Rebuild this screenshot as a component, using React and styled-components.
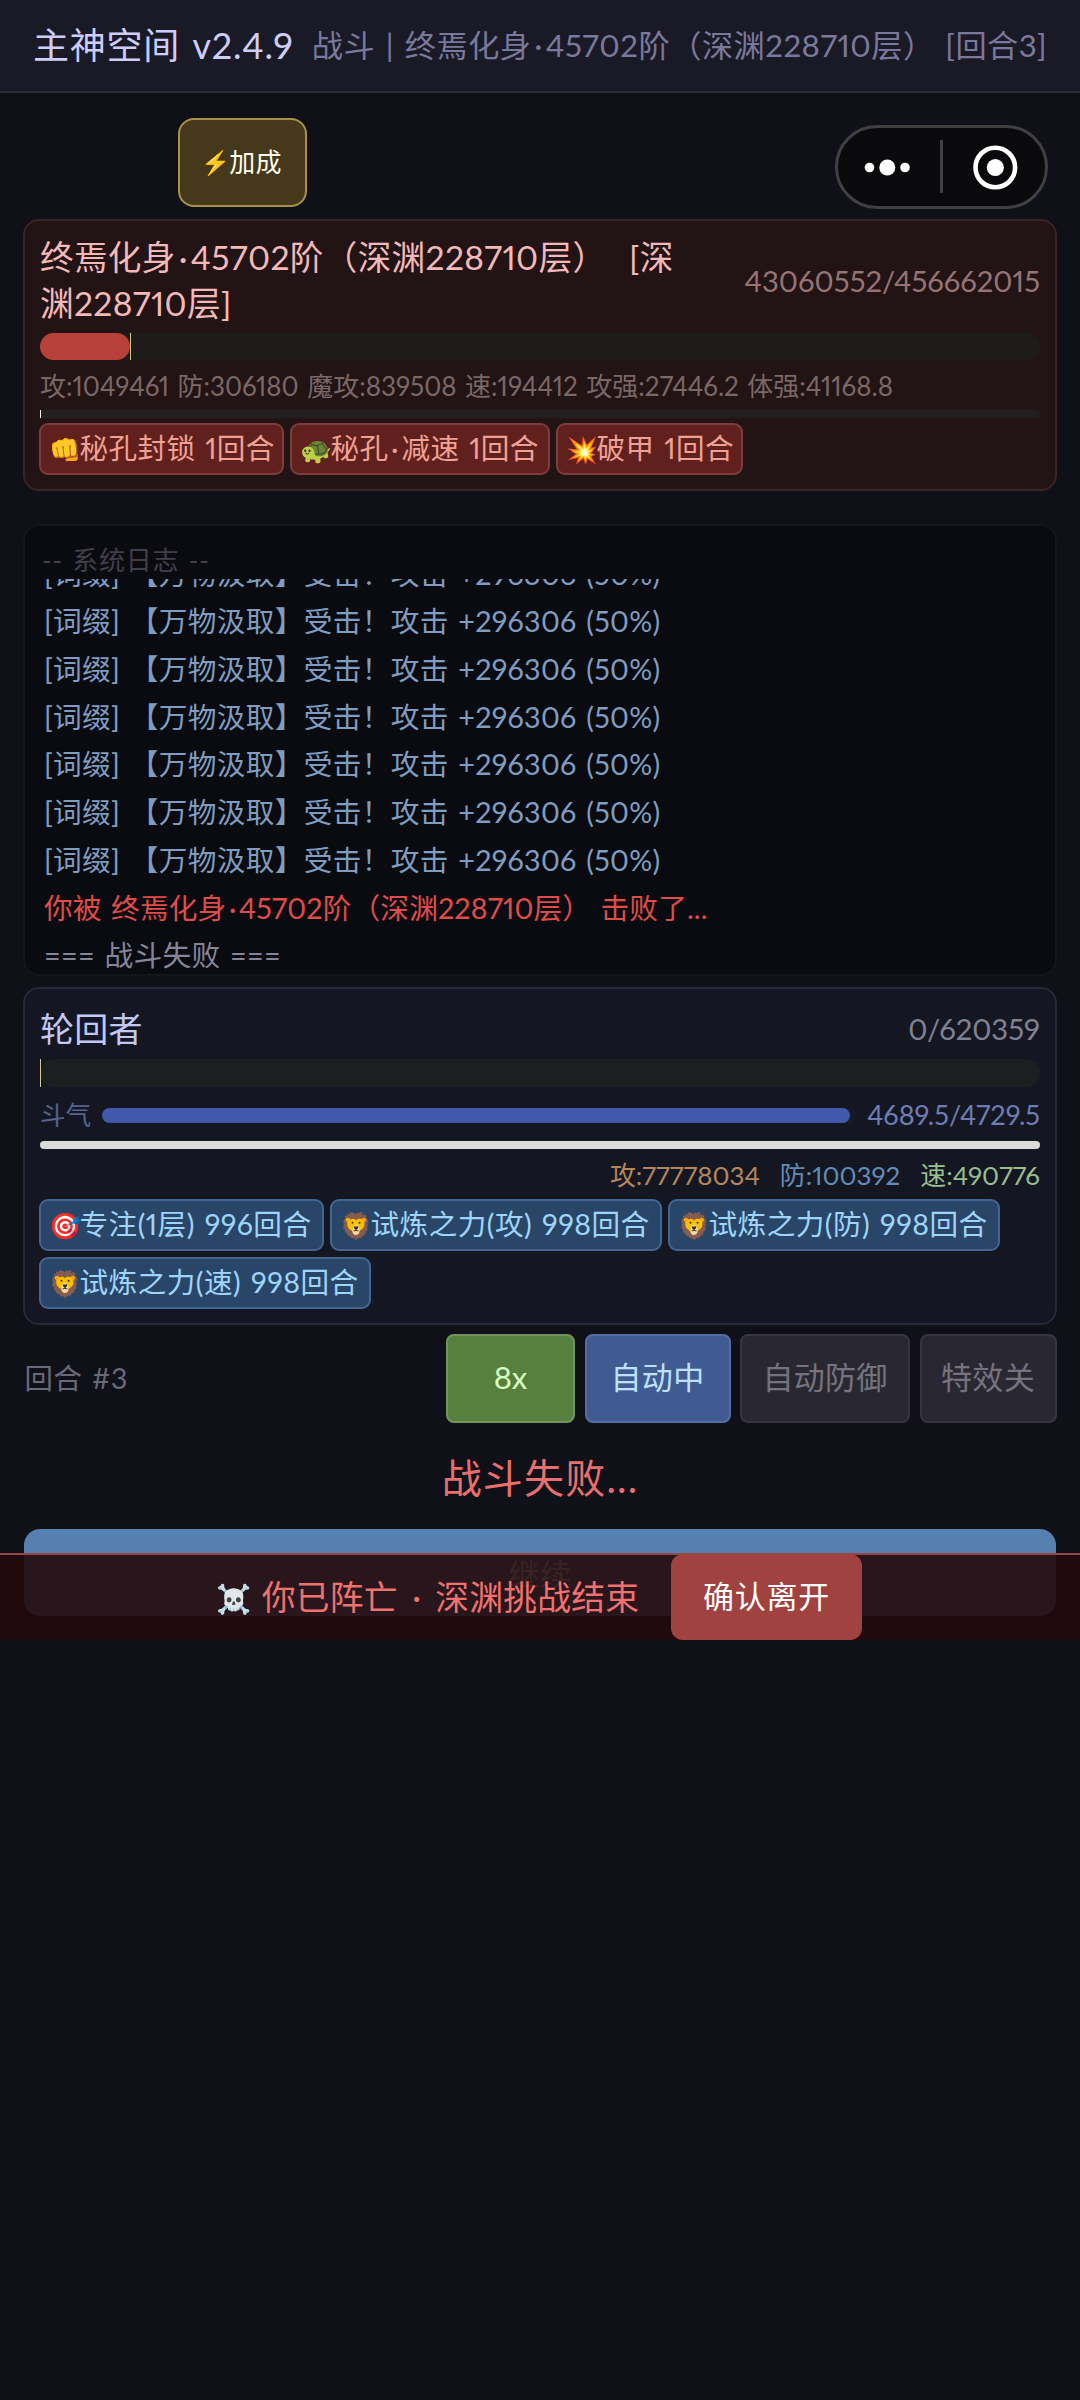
import React from "react";
import styled, { createGlobalStyle } from "styled-components";

const Global = createGlobalStyle`
  * { box-sizing: border-box; }
  body { margin: 0; background: #0f1018; }
`;

const Page = styled.main`
  position: relative;
  width: 1080px;
  height: 2400px;
  display: flex;
  flex-direction: column;
  background: #0f1018;
  overflow: hidden;
  font-family: Lato, "Noto Sans CJK SC", "Noto Color Emoji", sans-serif;
  font-weight: 400;
  font-variant-numeric: proportional-nums;
  white-space: nowrap;
`;

const Text = styled.span`
  display: block;
  font-size: ${(p) => p.$size}px;
  letter-spacing: ${(p) => p.$track || 0}px;
  word-spacing: 0.07em;
  line-height: ${(p) => (p.$line ? p.$line + "px" : 1.2)};
  color: ${(p) => p.$color};
  margin: ${(p) => p.$m || 0};
  white-space: pre;
`;

const Emoji = styled.span`
  font-size: ${(p) => (p.$small ? 0.84 : 0.9)}em;
  letter-spacing: 0;
  line-height: 0;
  margin: 0 ${(p) => (p.$small ? -0.03 : -0.07)}em;
  vertical-align: 0.03em;
`;

const Dot = styled.span`
  padding: 0 0.09em;
`;

function Label({ children, ...rest }) {
  const parts = [].concat(children).join("").split(/(☠️|\p{Extended_Pictographic}|·)/u);
  return (
    <Text {...rest}>
      {parts.map((part, i) => {
        if (i % 2 === 0) return part;
        return part === "·" ? <Dot key={i}>·</Dot> : <Emoji key={i} $small={part === "☠️"}>{part}</Emoji>;
      })}
    </Text>
  );
}

const Header = styled.header`
  height: 93px;
  padding: 0 33px;
  display: flex;
  align-items: center;
  justify-content: space-between;
  background: #1a1a26;
  border-bottom: 2px solid #2d2c39;
`;

const TopTools = styled.div`
  height: 126px;
  padding: 25px 32px 0 178px;
  display: flex;
  justify-content: space-between;
`;

const BoostButton = styled.button`
  width: 129px;
  height: 89px;
  padding: 0;
  display: flex;
  align-items: center;
  justify-content: center;
  border: 2px solid #a8924a;
  border-radius: 16px;
  background: #45381b;
  font: inherit;
`;

const Capsule = styled.div`
  width: 213px;
  height: 84px;
  margin-top: 7px;
  display: flex;
  align-items: center;
  border: 3px solid #404044;
  border-radius: 42px;
  background: #0a0a0c;
`;

const Card = styled.section`
  margin: ${(p) => p.$top || 0}px 23px 0;
  padding: ${(p) => p.$pad || "14px 15px"};
  height: ${(p) => p.$h}px;
  display: flex;
  flex-direction: column;
  border: 2px solid ${(p) => p.$line};
  border-radius: 16px;
  background: ${(p) => p.$bg};
`;

const Row = styled.div`
  display: flex;
  align-items: center;
  justify-content: space-between;
  height: ${(p) => p.$h}px;
`;

const Track = styled.div`
  display: flex;
  flex: ${(p) => (p.$grow ? 1 : "none")};
  height: ${(p) => p.$h}px;
  margin: ${(p) => p.$m || 0};
  border-radius: ${(p) => p.$h / 2}px;
  background: ${(p) => p.$bg};
`;

const Fill = styled.div`
  height: 100%;
  border-radius: ${(p) => p.$r}px;
  background: ${(p) => p.$bg};
`;

const Tick = styled.i`
  width: 1px;
  height: 100%;
  background: ${(p) => p.$bg};
`;

const Tags = styled.div`
  display: flex;
  flex-wrap: wrap;
  gap: 6px;
  margin: 5px -10px 0 -1px;
`;

const Tag = styled.span`
  height: 52px;
  width: ${(p) => p.$w}px;
  padding: 0 0 1px 10px;
  display: flex;
  align-items: center;
  border: 2px solid ${(p) => (p.$bad ? "#7e3c3b" : "#426691")};
  border-radius: 9px;
  background: ${(p) => (p.$bad ? "#60201e" : "#294668")};
`;

const LogLines = styled.div`
  height: 395px;
  display: flex;
  flex-direction: column;
  justify-content: flex-end;
  overflow: hidden;
  padding: 0 2px;

  & > :last-child {
    margin-bottom: -6px;
  }
`;

const StatRow = styled.div`
  display: flex;
  justify-content: flex-end;
  align-items: center;
  gap: 20px;
  height: 34px;
  margin-top: 11px;
  padding-bottom: 3px;
`;

const Controls = styled.div`
  display: flex;
  align-items: center;
  gap: 9.5px;
  height: 89px;
  margin: 9px 23.5px 0 24.5px;
`;

const Round = styled.div`
  flex: 1;
`;

const Control = styled.button`
  width: ${(p) => p.$w}px;
  height: 89px;
  padding: 0 0 1px;
  display: flex;
  align-items: center;
  justify-content: center;
  border: 2px solid ${(p) => p.$line};
  border-radius: 8px;
  background: ${(p) => p.$bg};
  font: inherit;
`;

const Result = styled.div`
  display: flex;
  justify-content: center;
  align-items: center;
  height: 106px;
  padding-top: 4px;
`;

const Continue = styled.button`
  height: 87px;
  margin: 0 24px;
  padding: 4px 0 0;
  display: flex;
  align-items: center;
  justify-content: center;
  border: 0;
  border-radius: 16px;
  background: #5580b0;
  font: inherit;
`;

const DeathBar = styled.div`
  position: absolute;
  left: 0;
  right: 0;
  top: 1553px;
  height: 87px;
  display: flex;
  padding-left: 217px;
  border-top: 2px solid rgba(178, 84, 84, 0.8);
  background: rgba(36, 10, 12, 0.9);
`;

const DeathText = styled.div`
  width: 454px;
  display: flex;
  align-items: center;
`;

const Leave = styled.button`
  width: 191px;
  height: 86px;
  margin-top: -1px;
  padding: 0;
  display: flex;
  align-items: center;
  justify-content: center;
  border: 0;
  border-radius: 12px;
  background: #a04340;
  font: inherit;
`;

const logs = [
  ...Array.from({ length: 7 }, () => ["[词缀] 【万物汲取】受击！攻击 +296306 (50%)", "#7f9dc0", 0.3]),
  ["你被 终焉化身·45702阶（深渊228710层） 击败了...", "#e04c48", 0.12],
  ["=== 战斗失败 ===", "#85859a", 0.3],
];

const debuffs = [
  ["👊秘孔封锁 1回合", 245],
  ["🐢秘孔·减速 1回合", 260],
  ["💥破甲 1回合", 187],
];

const buffs = [
  ["🎯专注(1层) 996回合", 285],
  ["🦁试炼之力(攻) 998回合", 332],
  ["🦁试炼之力(防) 998回合", 332],
  ["🦁试炼之力(速) 998回合", 332],
];

export default function App() {
  return (
    <Page>
      <Global />
      <Header>
        <Label $size={36} $track={0.75} $color="#cfcdfa">主神空间 v2.4.9</Label>
        <Label $size={31.2} $track={0.5} $color="#7a789c">战斗 | 终焉化身·45702阶（深渊228710层） [回合3]</Label>
      </Header>
      <TopTools>
        <BoostButton><Label $size={26} $track={0.3} $color="#fffdf2">⚡加成</Label></BoostButton>
        <Capsule>
          <svg width="207" height="78" viewBox="838 128 207 78">
            <g fill="#fff">
              <circle cx="869.5" cy="167.5" r="4.8" />
              <circle cx="887.3" cy="167.5" r="8" />
              <circle cx="905" cy="167.5" r="4.8" />
              <circle cx="995.3" cy="167.5" r="8.6" />
            </g>
            <rect x="940" y="140" width="3" height="53" fill="#404044" />
            <circle cx="995.3" cy="167.5" r="19.8" fill="none" stroke="#fff" strokeWidth="4.6" />
          </svg>
        </Capsule>
      </TopTools>

      <Card $h={272} $bg="#221314" $line="#3d2326">
        <Row $h={98}>
          <Label $size={33.6} $track={0.35} $line={46} $m="-8px 0 0" $color="#f3b9b9">{"终焉化身·45702阶（深渊228710层）  [深\n渊228710层]"}</Label>
          <Label $size={29.2} $track={0} $m="-6px 0 0" $color="#967476">43060552/456662015</Label>
        </Row>
        <Track $h={27} $bg="#1e1c1a"><Fill $r={13.5} $bg="#b8403b" style={{ width: "9%" }} /><Tick $bg="#c9c77c" /></Track>
        <Row $h={50}>
          <Label $size={26} $track={0} $m="3px 0 0" $color="#7a6766">攻:1049461 防:306180 魔攻:839508 速:194412 攻强:27446.2 体强:41168.8</Label>
        </Row>
        <Track $h={8} $bg="#251e21"><Tick $bg="#ffffff" /></Track>
        <Tags>
          {debuffs.map(([t, w]) => <Tag key={t} $bad $w={w}><Label $size={28.6} $track={0.4} $color="#f0a193">{t}</Label></Tag>)}
        </Tags>
      </Card>

      <Card $h={452} $bg="#0a0b10" $line="#15161d" $pad="16px 17px 0" $top={33}>
        <Row $h={37}><Label $size={26} $track={0.8} $color="#423e4c">-- 系统日志 --</Label></Row>
        <LogLines>
          {logs.map(([t, c, k], i) => <Label key={i} $size={28.7} $track={k} $line={47.7} $color={c}>{t}</Label>)}
        </LogLines>
      </Card>

      <Card $h={338} $bg="#141722" $line="#262a38" $top={11}>
        <Row $h={56}>
          <Label $size={34} $track={0.2} $m="-4px 0 0" $color="#c3c7f5">轮回者</Label>
          <Label $size={29.2} $track={0} $m="-4px 0 0" $color="#808294">0/620359</Label>
        </Row>
        <Track $h={28} $bg="#1c1e20"><Tick $bg="#cfc994" /></Track>
        <Row $h={56}>
          <Label $size={25.6} $track={0} $color="#56628c">斗气</Label>
          <Track $grow $h={15} $bg="#171b29" $m="0 11px"><Fill $r={7.5} $bg="#4059ab" style={{ width: "99.15%" }} /></Track>
          <Label $size={27.1} $track={0} $color="#6f7cb2">4689.5/4729.5</Label>
        </Row>
        <Track $h={8} $bg="#dbdbdb" $m="-2px 0 0" />
        <StatRow>
          <Label $size={25.9} $color="#b5865c">攻:77778034</Label>
          <Label $size={25.9} $color="#628bb5">防:100392</Label>
          <Label $size={25.9} $color="#98bd8e">速:490776</Label>
        </StatRow>
        <Tags>
          {buffs.map(([t, w]) => <Tag key={t} $w={w}><Label $size={28.6} $track={0.5} $color="#9fd5fb">{t}</Label></Tag>)}
        </Tags>
      </Card>

      <Controls>
        <Round><Label $size={28.4} $track={0.5} $color="#6a6979">回合 #3</Label></Round>
        <Control $w={129} $bg="#57803f" $line="#71945f"><Label $size={31} $color="#d8ffc2">8x</Label></Control>
        <Control $w={146} $bg="#3f5b91" $line="#546f9f"><Label $size={31} $track={0.3} $color="#bfe0ff">自动中</Label></Control>
        <Control $w={170} $bg="#292832" $line="#373640"><Label $size={31} $track={0.3} $color="#75747e">自动防御</Label></Control>
        <Control $w={137} $bg="#292832" $line="#373640"><Label $size={31} $track={0.3} $color="#75747e">特效关</Label></Control>
      </Controls>

      <Result><Label $size={40} $track={1.2} $color="#ea6f6c">战斗失败...</Label></Result>
      <Continue><Label $size={31} $track={0.5} $color="#ffffff">继续</Label></Continue>

      <DeathBar>
        <DeathText><Label $size={33.8} $track={0.2} $color="#f0716d">☠️ 你已阵亡 · 深渊挑战结束</Label></DeathText>
        <Leave><Label $size={31} $track={0.8} $color="#ffffff">确认离开</Label></Leave>
      </DeathBar>
    </Page>
  );
}
